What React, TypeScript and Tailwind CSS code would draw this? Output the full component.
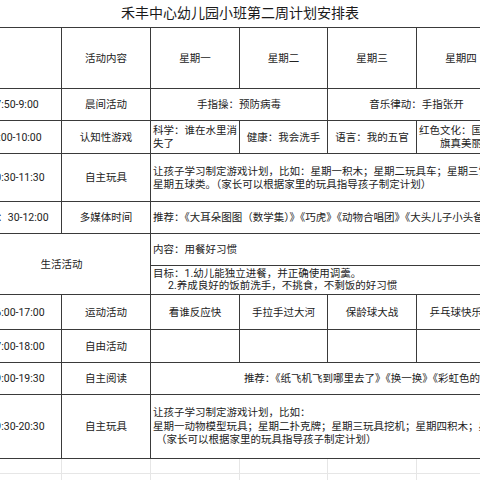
const cell = 'border border-[#3a3a3a] px-[2px] align-middle';
const center = `${cell} text-center`;
const left = `${cell} text-left`;
const faint = 'border border-[#e6e6e6]';

const days = ['星期一', '星期二', '星期三', '星期四', '星期五'];

export default function App() {
  return (
    <div
      className="w-[480px] h-[480px] overflow-hidden bg-white text-[#222] text-[10.5px] leading-[13px]"
      style={{ fontFamily: 'Roboto, "Noto Sans CJK SC", sans-serif' }}
    >
      <div className="h-[27px] flex items-center justify-center text-[14px] text-[#1a1a1a]">
        禾丰中心幼儿园小班第二周计划安排表
      </div>
      <table className="-ml-[28px] w-[622px] table-fixed border-collapse">
        <colgroup>
          <col className="w-[89px]" />
          <col className="w-[89px]" />
          <col className="w-[89px]" />
          <col className="w-[88px]" />
          <col className="w-[89px]" />
          <col className="w-[89px]" />
          <col className="w-[89px]" />
        </colgroup>
        <tbody>
          <tr className="h-[61px]">
            <td className={center}></td>
            <td className={center}>活动内容</td>
            {days.map(d => (
              <td key={d} className={center}>{d}</td>
            ))}
          </tr>
          <tr className="h-[32px]">
            <td className={center}>7:50-9:00</td>
            <td className={center}>晨间活动</td>
            <td colSpan={2} className={center}>手指操：预防病毒</td>
            <td colSpan={2} className={center}>音乐律动：手指张开</td>
            <td className={center}></td>
          </tr>
          <tr className="h-[33px]">
            <td className={center}>9:00-10:00</td>
            <td className={center}>认知性游戏</td>
            <td className={left}>
              科学：谁在水里消<br />失了
            </td>
            <td className={center}>健康：我会洗手</td>
            <td className={center}>语言：我的五官</td>
            <td className={left}>
              <div className="whitespace-nowrap">红色文化：国</div>
              <div className="whitespace-nowrap pl-[21px]">旗真美丽</div>
            </td>
            <td className={center}></td>
          </tr>
          <tr className="h-[48px]">
            <td className={center}>10:30-11:30</td>
            <td className={center}>自主玩具</td>
            <td colSpan={5} className={`${left} whitespace-nowrap`}>
              让孩子学习制定游戏计划，比如：星期一积木；星期二玩具车；星期三雪花片；星期四拼图；
              <br />
              星期五球类。（家长可以根据家里的玩具指导孩子制定计划）
            </td>
          </tr>
          <tr className="h-[32px]">
            <td className={center}>11：30-12:00</td>
            <td className={center}>多媒体时间</td>
            <td colSpan={5} className={`${left} whitespace-nowrap`}>
              推荐：《大耳朵图图（数学集）》《巧虎》《动物合唱团》《大头儿子小头爸爸》
            </td>
          </tr>
          <tr className="h-[32px]">
            <td rowSpan={2} colSpan={2} className={center}>生活活动</td>
            <td colSpan={5} className={`${left} whitespace-nowrap`}>内容：用餐好习惯</td>
          </tr>
          <tr className="h-[29px]">
            <td colSpan={5} className={`${left} whitespace-nowrap leading-[12px]`}>
              <div>目标：1.幼儿能独立进餐，并正确使用调羹。</div>
              <div className="pl-[15px]">2.养成良好的饭前洗手，不挑食，不剩饭的好习惯</div>
            </td>
          </tr>
          <tr className="h-[35px]">
            <td className={center}>16:00-17:00</td>
            <td className={center}>运动活动</td>
            <td className={center}>看谁反应快</td>
            <td className={center}>手拉手过大河</td>
            <td className={center}>保龄球大战</td>
            <td className={`${center} whitespace-nowrap`}>乒乓球快乐传</td>
            <td className={center}></td>
          </tr>
          <tr className="h-[33px]">
            <td className={center}>17:00-18:00</td>
            <td className={center}>自由活动</td>
            <td className={center}></td>
            <td className={center}></td>
            <td className={center}></td>
            <td className={center}></td>
            <td className={center}></td>
          </tr>
          <tr className="h-[32px]">
            <td className={center}>19:00-19:30</td>
            <td className={center}>自主阅读</td>
            <td colSpan={5} className={`${center} whitespace-nowrap`}>
              推荐：《纸飞机飞到哪里去了》《换一换》《彩虹色的花》
            </td>
          </tr>
          <tr className="h-[64px]">
            <td className={center}>19:30-20:30</td>
            <td className={center}>自主玩具</td>
            <td colSpan={5} className={`${left} whitespace-nowrap leading-[13.5px]`}>
              <div>让孩子学习制定游戏计划，比如：</div>
              <div>星期一动物模型玩具；星期二扑克牌；星期三玩具挖机；星期四积木；星期五球类；</div>
              <div className="pl-[3px]">（家长可以根据家里的玩具指导孩子制定计划）</div>
            </td>
          </tr>
          <tr className="h-[15px]">
            {[0, 1, 2, 3, 4, 5, 6].map(i => (
              <td key={i} className={faint}></td>
            ))}
          </tr>
          <tr className="h-[20px]">
            {[0, 1, 2, 3, 4, 5, 6].map(i => (
              <td key={i} className={faint}></td>
            ))}
          </tr>
        </tbody>
      </table>
    </div>
  );
}
